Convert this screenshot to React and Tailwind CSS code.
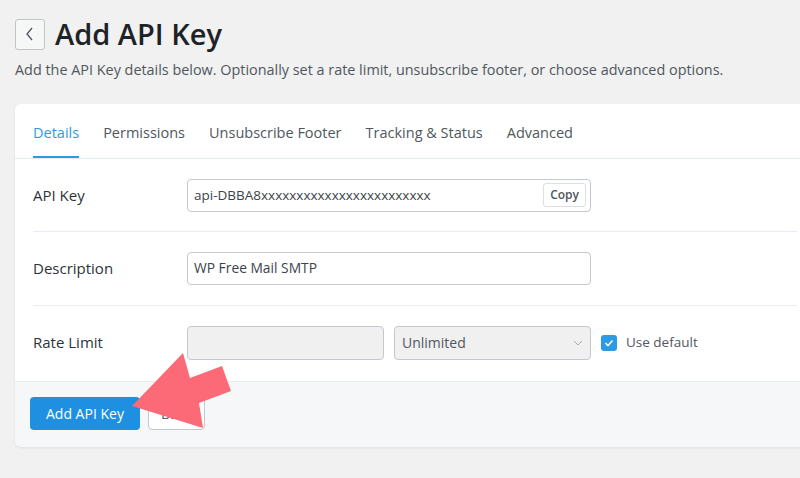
import React from 'react';

const tabs = ['Details', 'Permissions', 'Unsubscribe Footer', 'Tracking & Status', 'Advanced'];

const Row = ({ label, children, className }) => (
  <div className={`flex items-center pt-5 ${className}`}>
    <div className="w-[154px] shrink-0 text-[15px] font-medium text-[#2c3338]">{label}</div>
    {children}
  </div>
);

const App = () => {
  return (
    <div className="relative min-h-[478px] w-[800px] overflow-hidden bg-[#f1f1f1] text-[#3c434a]" style={{ fontFamily: '"Open Sans", "Noto Sans", sans-serif' }}>
      <div className="px-[15px] pt-[17px]">
        <div className="flex items-center gap-[10px]">
          <button className="flex h-[31px] w-[30px] items-center justify-center rounded-[3px] border border-[#c3c4c7] bg-[#f6f7f7] text-[#50575e]">
            <svg width="12" height="16" viewBox="0 0 12 16" fill="none" stroke="currentColor" strokeWidth="1.3">
              <path d="M8 2 L3 8 L8 14" />
            </svg>
          </button>
          <h1 className="text-[29px] font-semibold leading-[34px] text-[#1d2327]">Add API Key</h1>
        </div>
        <p className="mt-[8px] text-[14.4px] text-[#50575e]">
          Add the API Key details below. Optionally set a rate limit, unsubscribe footer, or choose advanced options.
        </p>
      </div>

      <div className="ml-[15px] mt-[23px] w-[800px] overflow-hidden rounded-md bg-white shadow-[0_1px_3px_rgba(0,0,0,0.08)]">
        <div className="flex gap-6 border-b border-[#e2ebf2] px-[18px]">
          {tabs.map((t, i) => (
            <div
              key={t}
              className={`pb-[12px] pt-[18px] text-[14.5px] leading-[22px] ${i === 0 ? 'border-b-2 border-[#2b9be3] text-[#2b9be3]' : 'border-b-2 border-transparent text-[#50575e]'}`}
            >
              {t}
            </div>
          ))}
        </div>

        <div className="px-[18px]">
          <Row label="API Key" className="pb-[19px] border-b border-[#e6ecf1]">
            <div className="flex h-[33px] w-[404px] items-center justify-between rounded-[4px] border border-[#c3c8ce] pl-[6px] pr-[4px]">
              <span className="text-[13.5px] text-[#3c434a]">api-DBBA8xxxxxxxxxxxxxxxxxxxxxxxx</span>
              <span className="rounded-[3px] border border-[#dcdfe3] px-[6px] py-[2px] text-[12px] font-semibold text-[#50575e]">Copy</span>
            </div>
          </Row>
          <Row label="Description" className="pb-5 border-b border-[#e6ecf1]">
            <div className="flex h-[33px] w-[404px] items-center rounded-[4px] border border-[#c3c8ce] px-[6px] text-[13.8px] text-[#3c434a]">
              WP Free Mail SMTP
            </div>
          </Row>
          <Row label="Rate Limit" className="pb-[21px]">
            <div className="flex items-center gap-[10px]">
              <div className="h-[34px] w-[197px] rounded-[4px] border border-[#c3c8ce] bg-[#f0f0f1]" />
              <div className="flex h-[34px] w-[197px] items-center justify-between rounded-[4px] border border-[#c3c8ce] bg-[#f0f0f1] px-[7px] text-[14px] text-[#50575e]">
                <span>Unlimited</span>
                <svg width="10" height="6" viewBox="0 0 10 6" fill="none" stroke="#a7aaad" strokeWidth="1">
                  <path d="M1 1 L5 5 L9 1" />
                </svg>
              </div>
              <div className="flex items-center gap-[9px]">
                <div className="flex h-[16px] w-[16px] items-center justify-center rounded-[3px] bg-[#2b9be3]">
                  <svg width="10" height="8" viewBox="0 0 10 8" fill="none" stroke="white" strokeWidth="1.6">
                    <path d="M1.5 4 L4 6.5 L8.5 1.5" />
                  </svg>
                </div>
                <span className="text-[13.5px] text-[#50575e]">Use default</span>
              </div>
            </div>
          </Row>
        </div>

        <div className="flex items-center gap-2 border-t border-[#e6ecf1] bg-[#f6f7f9] px-[15px] pb-[17px] pt-[15px]">
          <button className="h-[33px] rounded-[4px] bg-[#1e8fe1] px-[16px] text-[14px] font-medium text-white">Add API Key</button>
          <button className="h-[33px] rounded-[4px] border border-[#c3c8ce] bg-white px-[12px] text-[14px] text-[#50575e]">Back</button>
        </div>
      </div>

      <svg className="pointer-events-none absolute left-0 top-0" width="800" height="478" viewBox="0 0 800 478">
        <polygon
          points="132,406 183,353 190,378 222,366 231,391 199,403 203,428"
          fill="#fd6a77"
        />
      </svg>
    </div>
  );
};

export default App;
